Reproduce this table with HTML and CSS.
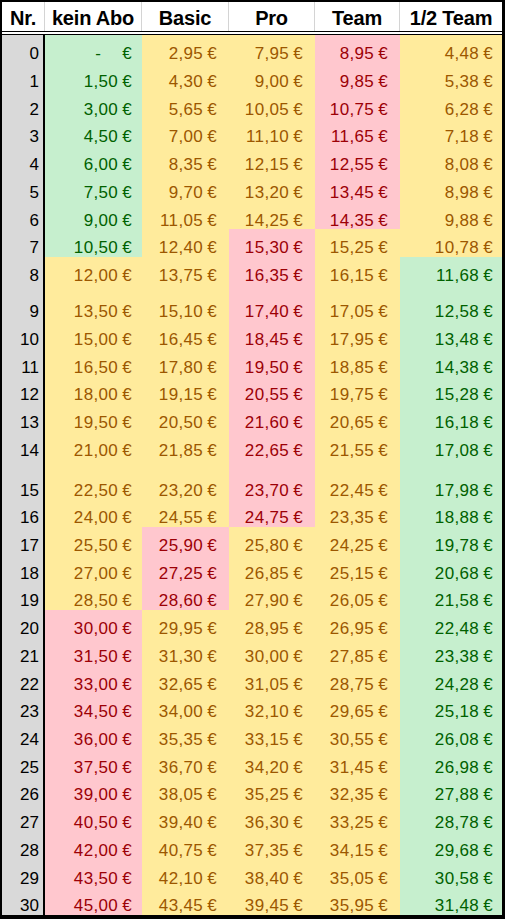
FILE: index.html
```html
<!DOCTYPE html>
<html lang="de">
<head>
<meta charset="utf-8">
<title>Preise</title>
<link rel="stylesheet" href="styles.css">
</head>
<body>
<div class="sheet">
  <div class="head">
    <div class="h">Nr.</div>
    <div class="h">kein Abo</div>
    <div class="h">Basic</div>
    <div class="h">Pro</div>
    <div class="h">Team</div>
    <div class="h last">1/2 Team</div>
  </div>
  <div class="row"><div class="nr">0</div><div class="c g"><span class="dash">-</span>€</div><div class="c y">2,95 €</div><div class="c y">7,95 €</div><div class="c r">8,95 €</div><div class="c y">4,48 €</div></div>
  <div class="row"><div class="nr">1</div><div class="c g">1,50 €</div><div class="c y">4,30 €</div><div class="c y">9,00 €</div><div class="c r">9,85 €</div><div class="c y">5,38 €</div></div>
  <div class="row"><div class="nr">2</div><div class="c g">3,00 €</div><div class="c y">5,65 €</div><div class="c y">10,05 €</div><div class="c r">10,75 €</div><div class="c y">6,28 €</div></div>
  <div class="row"><div class="nr">3</div><div class="c g">4,50 €</div><div class="c y">7,00 €</div><div class="c y">11,10 €</div><div class="c r">11,65 €</div><div class="c y">7,18 €</div></div>
  <div class="row"><div class="nr">4</div><div class="c g">6,00 €</div><div class="c y">8,35 €</div><div class="c y">12,15 €</div><div class="c r">12,55 €</div><div class="c y">8,08 €</div></div>
  <div class="row"><div class="nr">5</div><div class="c g">7,50 €</div><div class="c y">9,70 €</div><div class="c y">13,20 €</div><div class="c r">13,45 €</div><div class="c y">8,98 €</div></div>
  <div class="row"><div class="nr">6</div><div class="c g">9,00 €</div><div class="c y">11,05 €</div><div class="c y">14,25 €</div><div class="c r">14,35 €</div><div class="c y">9,88 €</div></div>
  <div class="row"><div class="nr">7</div><div class="c g">10,50 €</div><div class="c y">12,40 €</div><div class="c r">15,30 €</div><div class="c y">15,25 €</div><div class="c y">10,78 €</div></div>
  <div class="row"><div class="nr">8</div><div class="c y">12,00 €</div><div class="c y">13,75 €</div><div class="c r">16,35 €</div><div class="c y">16,15 €</div><div class="c g">11,68 €</div></div>
  <div class="row tall9"><div class="nr">9</div><div class="c y">13,50 €</div><div class="c y">15,10 €</div><div class="c r">17,40 €</div><div class="c y">17,05 €</div><div class="c g">12,58 €</div></div>
  <div class="row"><div class="nr">10</div><div class="c y">15,00 €</div><div class="c y">16,45 €</div><div class="c r">18,45 €</div><div class="c y">17,95 €</div><div class="c g">13,48 €</div></div>
  <div class="row"><div class="nr">11</div><div class="c y">16,50 €</div><div class="c y">17,80 €</div><div class="c r">19,50 €</div><div class="c y">18,85 €</div><div class="c g">14,38 €</div></div>
  <div class="row"><div class="nr">12</div><div class="c y">18,00 €</div><div class="c y">19,15 €</div><div class="c r">20,55 €</div><div class="c y">19,75 €</div><div class="c g">15,28 €</div></div>
  <div class="row"><div class="nr">13</div><div class="c y">19,50 €</div><div class="c y">20,50 €</div><div class="c r">21,60 €</div><div class="c y">20,65 €</div><div class="c g">16,18 €</div></div>
  <div class="row"><div class="nr">14</div><div class="c y">21,00 €</div><div class="c y">21,85 €</div><div class="c r">22,65 €</div><div class="c y">21,55 €</div><div class="c g">17,08 €</div></div>
  <div class="row tall15"><div class="nr">15</div><div class="c y">22,50 €</div><div class="c y">23,20 €</div><div class="c r">23,70 €</div><div class="c y">22,45 €</div><div class="c g">17,98 €</div></div>
  <div class="row"><div class="nr">16</div><div class="c y">24,00 €</div><div class="c y">24,55 €</div><div class="c r">24,75 €</div><div class="c y">23,35 €</div><div class="c g">18,88 €</div></div>
  <div class="row"><div class="nr">17</div><div class="c y">25,50 €</div><div class="c r">25,90 €</div><div class="c y">25,80 €</div><div class="c y">24,25 €</div><div class="c g">19,78 €</div></div>
  <div class="row"><div class="nr">18</div><div class="c y">27,00 €</div><div class="c r">27,25 €</div><div class="c y">26,85 €</div><div class="c y">25,15 €</div><div class="c g">20,68 €</div></div>
  <div class="row"><div class="nr">19</div><div class="c y">28,50 €</div><div class="c r">28,60 €</div><div class="c y">27,90 €</div><div class="c y">26,05 €</div><div class="c g">21,58 €</div></div>
  <div class="row"><div class="nr">20</div><div class="c r">30,00 €</div><div class="c y">29,95 €</div><div class="c y">28,95 €</div><div class="c y">26,95 €</div><div class="c g">22,48 €</div></div>
  <div class="row"><div class="nr">21</div><div class="c r">31,50 €</div><div class="c y">31,30 €</div><div class="c y">30,00 €</div><div class="c y">27,85 €</div><div class="c g">23,38 €</div></div>
  <div class="row"><div class="nr">22</div><div class="c r">33,00 €</div><div class="c y">32,65 €</div><div class="c y">31,05 €</div><div class="c y">28,75 €</div><div class="c g">24,28 €</div></div>
  <div class="row"><div class="nr">23</div><div class="c r">34,50 €</div><div class="c y">34,00 €</div><div class="c y">32,10 €</div><div class="c y">29,65 €</div><div class="c g">25,18 €</div></div>
  <div class="row"><div class="nr">24</div><div class="c r">36,00 €</div><div class="c y">35,35 €</div><div class="c y">33,15 €</div><div class="c y">30,55 €</div><div class="c g">26,08 €</div></div>
  <div class="row"><div class="nr">25</div><div class="c r">37,50 €</div><div class="c y">36,70 €</div><div class="c y">34,20 €</div><div class="c y">31,45 €</div><div class="c g">26,98 €</div></div>
  <div class="row"><div class="nr">26</div><div class="c r">39,00 €</div><div class="c y">38,05 €</div><div class="c y">35,25 €</div><div class="c y">32,35 €</div><div class="c g">27,88 €</div></div>
  <div class="row"><div class="nr">27</div><div class="c r">40,50 €</div><div class="c y">39,40 €</div><div class="c y">36,30 €</div><div class="c y">33,25 €</div><div class="c g">28,78 €</div></div>
  <div class="row"><div class="nr">28</div><div class="c r">42,00 €</div><div class="c y">40,75 €</div><div class="c y">37,35 €</div><div class="c y">34,15 €</div><div class="c g">29,68 €</div></div>
  <div class="row"><div class="nr">29</div><div class="c r">43,50 €</div><div class="c y">42,10 €</div><div class="c y">38,40 €</div><div class="c y">35,05 €</div><div class="c g">30,58 €</div></div>
  <div class="row"><div class="nr">30</div><div class="c r">45,00 €</div><div class="c y">43,45 €</div><div class="c y">39,45 €</div><div class="c y">35,95 €</div><div class="c g">31,48 €</div></div>
</div>
</body>
</html>
```
FILE: styles.css
```css
html, body {
  margin: 0;
  padding: 0;
  background: #ffffff;
}

.sheet {
  width: 505px;
  box-sizing: border-box;
  border-style: solid;
  border-color: #000000;
  border-width: 2px 3px 4px 2px;
  font-family: "Liberation Sans", Arial, sans-serif;
}

.head,
.row {
  display: grid;
  grid-template-columns: 43px 97px 87px 86px 85px 102px;
}

.head {
  height: 33px;
  box-sizing: border-box;
  border-bottom: 4px double #000000;
  background: #ffffff;
}

.h {
  display: flex;
  align-items: flex-end;
  justify-content: center;
  padding-bottom: 3px;
  box-sizing: border-box;
  border-right: 1px solid #d4d4d4;
  font-weight: bold;
  font-size: 20px;
  line-height: 20px;
  letter-spacing: -0.2px;
  color: #000000;
  white-space: nowrap;
}

.h.last {
  border-right: none;
}

.row {
  height: 27.72px;
}

.row.tall9 {
  height: 36.3px;
}

.row.tall15 {
  height: 39.7px;
}

.nr,
.c {
  display: flex;
  align-items: flex-end;
  justify-content: flex-end;
  box-sizing: border-box;
  font-size: 17px;
  line-height: 17px;
  padding-bottom: 0.5px;
  white-space: nowrap;
}

.c {
  letter-spacing: 0.35px;
  word-spacing: -1px;
}

.nr {
  background: #d9d9d9;
  border-right: 2px solid #000000;
  padding-right: 4px;
  color: #000000;
}

.c:nth-child(2) { padding-right: 10px; }
.c:nth-child(3) { padding-right: 12px; }
.c:nth-child(4) { padding-right: 12px; }
.c:nth-child(5) { padding-right: 12px; }
.c:nth-child(6) { padding-right: 9px; }

.g {
  background: #c6efce;
  color: #006100;
}

.y {
  background: #ffeb9c;
  color: #9c5700;
}

.r {
  background: #ffc7ce;
  color: #9c0006;
}

.dash {
  margin-right: 21px;
}
```
